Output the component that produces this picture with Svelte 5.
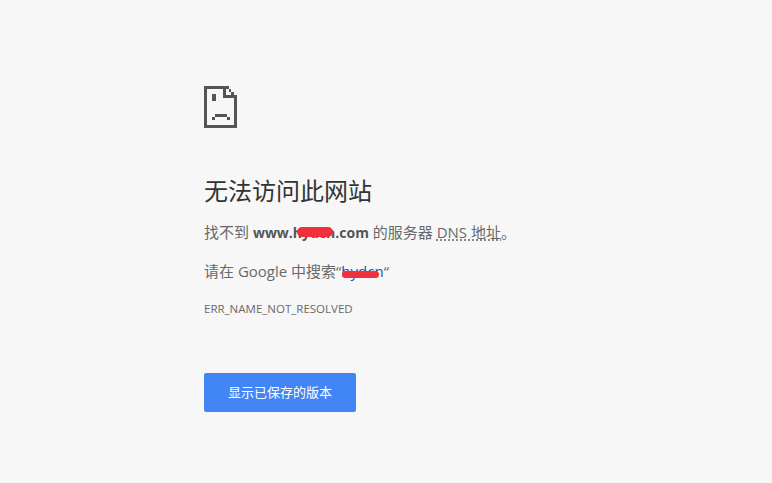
<script lang="ts">
	const host = 'www.hydcn.com';
	const query = 'hydcn';
	const errorCode = 'ERR_NAME_NOT_RESOLVED';
</script>

<main class="page">
	<svg class="sad-file" width="33" height="42" viewBox="0 0 33 42" fill="#555" aria-hidden="true" shape-rendering="crispEdges">
		<!-- outline -->
		<path d="M0 0H25V3H3V39H30V10H33V42H0Z" />
		<!-- fold -->
		<path d="M19 3H22V9H30V12H19Z" />
		<path d="M25 3H27V6H25ZM27 6H30V9H27ZM30 9H33V11H30Z" />
		<!-- eye -->
		<path d="M8 8H12V15H8Z" />
		<!-- frown -->
		<path d="M11 28H23V31H11ZM8 31H11V34H8ZM23 31H26V34H23Z" />
	</svg>

	<h1>无法访问此网站</h1>

	<p class="summary">
		找不到 <strong class="masked">{host}<span class="scribble host"></span></strong> 的服务器 <abbr>DNS 地址</abbr>。
	</p>

	<p class="suggest">
		请在 Google 中搜索“<a class="masked" href="#search">{query}<span class="scribble query"></span></a>“
	</p>

	<div class="code">{errorCode}</div>

	<button type="button">显示已保存的版本</button>
</main>

<style>
	:global(body) {
		margin: 0;
		background: #f7f7f7;
	}

	.page {
		box-sizing: border-box;
		height: 483px;
		padding: 86px 0 0 204px;
		color: #696969;
		font-family: "Open Sans", "Noto Sans CJK SC", sans-serif;
		font-size: 15px;
		overflow: hidden;
	}

	.sad-file {
		display: block;
	}

	h1 {
		margin: 47px 0 0;
		color: #333;
		font-size: 24px;
		font-weight: 400;
		line-height: 32px;
	}

	p {
		margin: 0;
		line-height: 22px;
	}

	.summary {
		margin-top: 14px;
	}

	.suggest {
		margin-top: 16px;
	}

	strong {
		font-size: 14px;
		font-weight: 700;
		color: #555;
	}

	abbr {
		text-decoration: underline dotted #666;
		text-underline-offset: 2px;
	}

	a {
		color: #2b4f9c;
		text-decoration: none;
	}

	.masked {
		position: relative;
	}

	/* red marker over the redacted bits */
	.scribble {
		position: absolute;
		background: #f0303a;
		border-radius: 5px;
	}

	.scribble.host {
		left: 44px;
		top: 4px;
		width: 36px;
		height: 10px;
	}

	.scribble.query {
		left: 1px;
		top: 10px;
		width: 37px;
		height: 7px;
	}

	.code {
		margin-top: 19px;
		font-size: 11.5px;
		line-height: 16px;
	}

	button {
		display: block;
		box-sizing: border-box;
		width: 152px;
		height: 39px;
		margin-top: 56px;
		padding: 0 0 2px;
		border: none;
		border-radius: 2px;
		background: #4285f4;
		color: #fff;
		font: inherit;
		font-size: 13px;
		cursor: pointer;
	}
</style>
